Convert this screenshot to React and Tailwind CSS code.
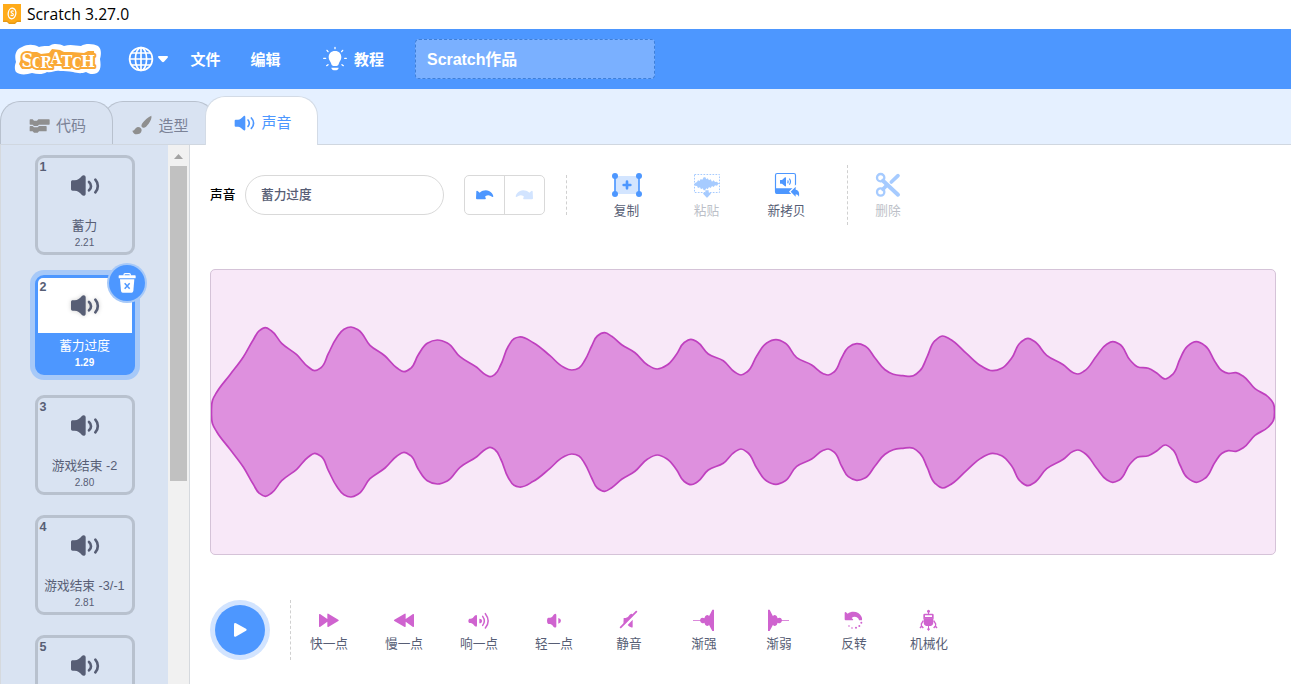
import React from "react";

const SOUNDS = [
  { name: "蓄力", size: "2.21" },
  { name: "蓄力过度", size: "1.29", selected: true },
  { name: "游戏结束 -2", size: "2.80" },
  { name: "游戏结束 -3/-1", size: "2.81" },
  { name: "", size: "" },
];

// Envelope of the sound: [x, half amplitude]
const WAVE = [
  [211.5, 0], [212.6, 12], [216.7, 19.7], [230, 37.3], [243.3, 55], [253.3, 72.3], [259.3, 81.3], [265.3, 84.3],
  [271.3, 81.3], [281.7, 68.7], [296.7, 57.3], [308.3, 45], [314.7, 41.3], [321, 44.3], [328.3, 58.3], [336.7, 74.3],
  [344, 82.7], [351, 85], [358.3, 82], [370, 66.7], [385, 56], [396.7, 44.3], [404, 40.3], [410.7, 43.7],
  [418.3, 57.3], [427.3, 68.7], [437.3, 72], [447.3, 69], [460, 55.3], [476.7, 44.7], [486, 37], [490, 35.3],
  [495, 37.7], [500.7, 47], [508.3, 65.7], [514, 73.3], [519.3, 75], [533.3, 69.3], [550, 56.3], [563.3, 45],
  [571.7, 42], [579, 44], [585, 52], [591.7, 66], [597.3, 76], [604.7, 79.3], [611.7, 75.7], [621.7, 67.3],
  [635, 59.3], [647.3, 47.3], [657.3, 43], [666.7, 46.7], [676.7, 58], [684, 69.3], [691, 72.7], [697.3, 70],
  [708.3, 58], [723.3, 51.3], [735, 39.7], [741, 37], [747.3, 40.3], [756.7, 56], [766.7, 69], [776, 72.3],
  [785, 69], [796.7, 54.3], [811.7, 47], [823.3, 38.3], [828.3, 37], [834, 40], [841.7, 54.3], [848.3, 64.7],
  [856.7, 68.3], [865, 66], [875, 54], [885, 42.3], [893.3, 37.7], [903, 36.3], [913.3, 36.2], [920, 41.3],
  [927.3, 55.7], [935, 71.3], [942.7, 76], [949.3, 73.3], [966.7, 58.3], [981.7, 45.7], [992.3, 41.3], [1001.7, 43.7],
  [1011.7, 54], [1020.7, 69.7], [1028, 73.7], [1034.3, 70.7], [1046.7, 56.7], [1063.3, 47.3], [1073.3, 39.3], [1078, 38],
  [1084.3, 41], [1096.7, 56.3], [1106.7, 67.7], [1112.7, 70.3], [1119.3, 68], [1130, 52], [1137.3, 45.3], [1148.3, 43.7],
  [1156.7, 39], [1165.3, 33], [1172.7, 37.7], [1180, 53], [1187.3, 65.7], [1196.3, 70.3], [1205, 66.3], [1215, 50.3],
  [1221.7, 41.5], [1228.3, 38.7], [1236, 39.3], [1243.3, 35.7], [1255, 23.3], [1268.3, 15], [1273.3, 8.7], [1274.5, 0],
];

// Closed smooth curve; tangents are weighted by chord length
function wavePath() {
  const top = WAVE.map(([x, a]) => [x - 211, 142 - a]);
  const bottom = WAVE.slice(1, -1).reverse().map(([x, a]) => [x - 211, 142 + a]);
  const p = [...top, ...bottom];
  const n = p.length;
  const tangent = p.map((b, i) => {
    const a = p[(i + n - 1) % n], c = p[(i + 1) % n];
    const d1 = Math.hypot(b[0] - a[0], b[1] - a[1]);
    const d2 = Math.hypot(c[0] - b[0], c[1] - b[1]);
    return [0, 1].map((j) => (((b[j] - a[j]) / d1) * d2 + ((c[j] - b[j]) / d2) * d1) / (d1 + d2));
  });
  let d = `M${p[0][0]} ${p[0][1]}`;
  for (let i = 0; i < n; i++) {
    const b = p[i], c = p[(i + 1) % n], t1 = tangent[i], t2 = tangent[(i + 1) % n];
    const k = Math.hypot(c[0] - b[0], c[1] - b[1]) / 2.7;
    d += "C" + [b[0] + t1[0] * k, b[1] + t1[1] * k, c[0] - t2[0] * k, c[1] - t2[1] * k, c[0], c[1]].map((v) => v.toFixed(2)).join(" ");
  }
  return d + "Z";
}

function Speaker({ className }) {
  return (
    <svg className={className} viewBox="210 87 90 69" fill="currentColor">
      <path d="M218 106h6c9 0 16-6 21-12 4-5 12-4 12 3v49c0 7-8 8-12 3-5-6-12-12-21-12h-6c-3 0-5-2-5-5v-21c0-3 2-5 5-5z" />
      <path d="M267 111c8 7 8 18 0 25M286 104c10 11 10 27 0 38" fill="none" stroke="currentColor" strokeWidth="8" strokeLinecap="round" />
    </svg>
  );
}

function Logo() {
  return (
    <svg className="h-[32px] w-[87px]" viewBox="0 0 87 32">
      <path
        d="M8 4C13 1 20 1 25 4C30 2 35 4 37 2C40 0 47 1 50 3C57 1 62 3 67 3C72 0 80 1 84 3C88 6 87 12 86 16C87 22 87 27 83 30C79 32 75 31 72 29C67 31 63 30 59 29C54 28 51 28 46 28C41 27 38 30 33 29C28 32 23 31 18 30C12 32 5 32 2 29C0 25 1 22 2 19C0 12 2 6 8 4Z"
        fill="#fff"
      />
      <path d="M10 9h13l4 2 8-1 3-4 8 1 4 2h8l12 1 4-2h6q1 7 0 15l-8 2-9-1-8 1-8-2-14-1-6 3h-10l-9 1-3-5z" fill="#faa936" />
      <g fontFamily="'DejaVu Serif Condensed', 'DejaVu Serif', serif">
        <text
          x="7.500 18 26.200 36.500 47 58 67"
          y="24 25 24.500 20.500 24 25 24.300"
          fontSize="18"
          fill="#fff"
          stroke="#faa936"
          strokeWidth="4"
          strokeLinejoin="round"
          paintOrder="stroke"
        >
          S<tspan fontSize="14">C</tspan><tspan fontSize="16">R</tspan><tspan fontSize="16">A</tspan><tspan fontSize="17">T</tspan><tspan fontSize="14">C</tspan><tspan fontSize="16.500">H</tspan>
        </text>
      </g>
    </svg>
  );
}

function TitleBar() {
  return (
    <div className="flex h-[29px] shrink-0 items-center bg-white pb-[2px] pl-[3px]">
      <svg className="h-[20px] w-[18px]" viewBox="0 0 18 20">
        <path d="M0 1h18v17h-4l-2 2H6l-2-2H0z" fill="#e69a17" />
        <path d="M0 0h18v16.500h-4l-2 2H6l-2-2H0z" fill="#ffab19" />
        <ellipse cx="9" cy="9.500" rx="3.800" ry="5.300" fill="none" stroke="#fff" strokeWidth="1.300" transform="rotate(8 9 9.500)" />
        <path d="M10.500 7.500c-1-1-2.600-.6-2.500.6.2 1.200 2.400 1 2.400 2.400 0 1.300-2 1.500-2.700.4" fill="none" stroke="#fff" strokeWidth="1.100" />
      </svg>
      <span className="ml-[6px] text-[15.700px] leading-[20px] text-black [font-family:'Open_Sans','Noto_Sans',sans-serif]">Scratch 3.27.0</span>
    </div>
  );
}

function MenuBar() {
  return (
    <div className="flex h-[60px] shrink-0 items-center bg-[#4d97ff] pl-[14px] text-[15px] font-bold text-white">
      <Logo />
      <svg className="ml-[27px] h-[26px] w-[26px]" viewBox="0 0 26 26" fill="none" stroke="#fff" strokeWidth="1.700">
        <circle cx="13" cy="13" r="11.400" />
        <ellipse cx="13" cy="13" rx="5.600" ry="11.400" />
        <path d="M13 1.600v22.800M1.600 13h22.800M3.500 7h19M3.500 19h19" />
      </svg>
      <svg className="ml-[4px] h-[7px] w-[10px]" viewBox="0 0 10 7">
        <path d="M1 0h8c1 0 1.300 1 .6 1.700L6 5.700c-.6.6-1.400.6-2 0L.4 1.700C-.3 1 0 0 1 0z" fill="#fff" />
      </svg>
      <span className="ml-[22.500px] w-[60px] pt-[2px]">文件</span>
      <span className="w-[72px] pt-[2px]">编辑</span>
      <svg className="h-[26px] w-[24px]" viewBox="968 140 72 78" fill="#fff">
        <path d="M1004 155c12 0 19 8 19 19 0 9-6 13-8 20-1 5-3 6-11 6s-10-1-11-6c-2-7-8-11-8-20 0-11 7-19 19-19z" />
        <path d="M993 205h22c0 5-5 8-11 8s-11-3-11-8z" />
        <path d="M1004 144v4M980 153l3 4M1027 153l-3 4M970 177h6M1033 177h5M979 199l4-3M1029 199l-4-3" stroke="#fff" strokeWidth="4" strokeLinecap="round" />
      </svg>
      <span className="ml-[7.500px] pt-[2px]">教程</span>
      <div className="ml-[31px] flex h-[40px] w-[240px] items-center rounded-[4px] border border-dashed border-[#3f7fd8] bg-[#7ab0ff] pt-[2px] pl-[11px] text-[16px]">
        <span className="tracking-[-0.050px]">Scratch作品</span>
      </div>
    </div>
  );
}

function Tabs() {
  return (
    <div className="flex h-[56px] shrink-0 items-end border-b border-[#d0d7e0] bg-[#e5f0ff] text-[15px] text-[#7b8296]">
      <div className="relative z-10 flex h-[43px] w-[113px] items-center rounded-t-[20px] border border-b-0 border-[#b8c1ce] bg-[#d9e3f2] pt-[5px] pl-[28px]">
        <svg className="h-[16px] w-[21px]" viewBox="88 353 63 48" fill="#8f8f8f">
          <path d="M92 357h7l4 4h9l4-4h32q2 0 2 2v12q0 2-2 2h-30l-4 4h-11l-4-4h-7q-2 0-2-2v-12q0-2 2-2z" />
          <path d="M92 377h7l4 4h11l4-4h21q2 0 2 2v12q0 2-2 2h-21l-4 4h-11l-4-4h-7q-2 0-2-2v-12q0-2 2-2z" />
        </svg>
        <span className="ml-[6px] pt-px">代码</span>
      </div>
      <div className="-ml-[10px] flex h-[43px] w-[112px] items-center rounded-t-[20px] border border-b-0 border-[#b8c1ce] bg-[#d9e3f2] pt-[4px] pl-[28px]">
        <svg className="h-[20px] w-[20px]" viewBox="398 344 60 60" fill="#8f8f8f">
          <path d="M456 346c2 6-2 15-8 24-6 8-12 14-17 12-6-2-6-7-2-13 7-10 18-20 27-23z" />
          <path d="M399 391c8 1 8-10 17-11 7 0 11 5 11 10-1 9-8 12-15 12-6 0-11-4-13-11z" />
        </svg>
        <span className="ml-[6.500px] pt-[2px]">造型</span>
      </div>
      <div className="relative z-10 -mb-px -ml-[10px] flex h-[49px] w-[113px] items-center rounded-t-[20px] border border-b-0 border-[#d3dbe6] bg-white pt-[4px] pl-[28px] text-[#4d97ff]">
        <svg className="h-[18px] w-[22px]" viewBox="703 343 66 54" fill="currentColor">
          <path d="M708 360h7c6 0 11-5 15-9 4-4 7-3 7 2v35c0 5-3 6-7 2-4-4-9-9-15-9h-7c-2 0-3-1-3-3v-15c0-2 1-3 3-3z" />
          <path d="M745 361c5 5 5 14 0 19M755 355c9 9 9 22 0 31" fill="none" stroke="currentColor" strokeWidth="5" strokeLinecap="round" />
        </svg>
        <span className="ml-[5.500px] pt-px">声音</span>
      </div>
    </div>
  );
}

function SoundTile({ index, name, size, selected }) {
  return (
    <div
      className={
        "relative flex h-[100px] w-[100px] shrink-0 flex-col items-center rounded-[9px] border-[3px] " +
        (selected
          ? "border-[#4d97ff] bg-[#4d97ff] text-white shadow-[0_0_0_5px_#a7c9f8]"
          : "border-[#b8c1ce] text-[#575e75]")
      }
    >
      <div className={"flex h-[55px] w-full items-center justify-center pb-px text-[#575e75] " + (selected ? "rounded-t-[5px] bg-white" : "")}>
        <Speaker className={"h-[23px] w-[30px] " + (selected ? "drop-shadow-[0_0_2px_rgba(0,0,0,0.2)]" : "")} />
      </div>
      {name && <span className="mt-[6px] text-[12.700px] leading-[15px] whitespace-nowrap">{name}</span>}
      {size && <span className={"mt-[2px] text-[10px] leading-[13px] " + (selected ? "font-bold" : "")}>{size}</span>}
      <span className="absolute top-[2px] left-[2px] text-[12.500px] leading-[15px] font-bold text-[#575e75]">{index}</span>
      {selected && (
        <span className="absolute top-[-13px] right-[-13px] flex h-[36px] w-[36px] items-center justify-center rounded-full bg-[#4d97ff] shadow-[0_0_0_2px_#a7c9f8]">
          <svg className="h-[20px] w-[18px]" viewBox="355 382 54 60">
            <path d="M373 390v-3q0-3 3-3h13q3 0 3 3v3" fill="none" stroke="#fff" strokeWidth="3.500" />
            <rect x="357" y="389" width="51" height="9" rx="2" fill="#fff" />
            <path d="M361 401h43l-3 35q-1 5-5 5h-27q-4 0-5-5z" fill="#fff" />
            <path d="M375 413l15 16M390 413l-15 16" stroke="#4d97ff" strokeWidth="4.500" />
          </svg>
        </span>
      )}
    </div>
  );
}

function Sidebar() {
  return (
    <div className="flex w-[190px] shrink-0 overflow-hidden border-x border-[#d5d9de] bg-[#d9e3f2]">
      <div className="flex w-[167px] shrink-0 flex-col items-center gap-[20px] pt-[10px]">
        {SOUNDS.map((s, i) => (
          <SoundTile key={i} index={i + 1} {...s} />
        ))}
      </div>
      <div className="flex grow flex-col items-center bg-[#f1f1f1]">
        <div className="flex h-[21px] items-center">
          <svg className="mt-[2px] h-[5px] w-[9px]" viewBox="0 0 9 5"><path d="M0 5L4.500 0L9 5z" fill="#a3a3a3" /></svg>
        </div>
        <div className="h-[315px] w-[17px] bg-[#c1c1c1]" />
      </div>
    </div>
  );
}

function ToolButton({ label, children, viewBox, className = "" }) {
  return (
    <div className={"flex w-[80px] flex-col items-center " + className}>
      <svg className="h-[30px] w-[40px] shrink-0" viewBox={viewBox}>{children}</svg>
      <span className="mt-[3px] text-[12.700px] leading-[16px]">{label}</span>
    </div>
  );
}

function Toolbar() {
  return (
    <div className="flex h-[60px] items-center text-[12.700px] text-[#575e75]">
      <span className="w-[35px] pt-px font-medium text-black">声音</span>
      <div className="flex h-[40px] w-[199px] items-center rounded-full border border-[#d9d9d9] pt-px pl-[15px] font-medium">蓄力过度</div>
      <div className="ml-[20px] flex h-[40px] w-[81px] rounded-[5px] border border-[#d9d9d9]">
        <div className="flex w-[40px] items-center justify-center border-r border-[#d9d9d9]">
          <svg className="h-[12px] w-[20px]" viewBox="825 101 60 36" fill="#4d97ff">
            <path d="M829 108q1-3 4-1l6 5c9-7 19-9 28-5 7 3 12 9 13 16 0 2-2 3-4 1-6-5-13-6-19-2-2 2-2 3 0 5q2 5-2 5h-24q-3 0-3-3z" />
          </svg>
        </div>
        <div className="flex w-[38px] items-center justify-center">
          <svg className="h-[12px] w-[20px] -scale-x-100" viewBox="825 101 60 36" fill="#d2e4ff">
            <path d="M829 108q1-3 4-1l6 5c9-7 19-9 28-5 7 3 12 9 13 16 0 2-2 3-4 1-6-5-13-6-19-2-2 2-2 3 0 5q2 5-2 5h-24q-3 0-3-3z" />
          </svg>
        </div>
      </div>
      <div className="ml-[21px] h-[40px] border-l border-dashed border-[#d0d0d0]" />
      <div className="ml-[19.500px] flex h-[50px]">
        <ToolButton label="复制" viewBox="141 45 120 90">
          <rect x="165" y="63" width="72" height="54" fill="#d3e5ff" />
          <path d="M165 63v54M237 63v54" stroke="#4d97ff" strokeWidth="5" />
          <g fill="#4d97ff">
            <circle cx="165" cy="63" r="9" /><circle cx="237" cy="63" r="9" />
            <circle cx="165" cy="117" r="9" /><circle cx="237" cy="117" r="9" />
          </g>
          <path d="M201 80v20M191 90h20" stroke="#4d97ff" strokeWidth="8" strokeLinecap="round" />
        </ToolButton>
        <ToolButton label="粘贴" viewBox="381 45 120 90" className="text-[#bcbfc8]">
          <rect x="403.500" y="58.500" width="75" height="54" fill="none" stroke="#a6cbff" strokeWidth="3" strokeDasharray="5 4" />
          <path d="M404 85l7-4 3-5 5 2 3-6 5 2 4-7h5l3 6 4-3 4 6 5-3 4 7 5-4 4 5 6-1 3 4 5 1-5 3-3 4-6-1-4 5-5-3-4 6-5-3-4 7-4-3-4 6h-4l-3-6-5 3-3-6-6 2-3-6-6-1z" fill="#a6cbff" />
          <path d="M436 106h10v7h5q3 1 1 4l-9 10q-2 2-4 0l-9-10q-2-3 1-4h5z" fill="#a6cbff" />
        </ToolButton>
        <ToolButton label="新拷贝" viewBox="621 45 120 90">
          <rect x="646.500" y="55.500" width="60" height="60" rx="5" fill="#fff" stroke="#4d97ff" strokeWidth="3.500" />
          <path d="M646 100h61v11q0 6-6 6h-49q-6 0-6-6z" fill="#4d97ff" />
          <path d="M661 75h5l9-8q3-1 3 2v23q0 3-3 2l-9-8h-5q-1 0-1-1v-9q0-1 1-1z" fill="#4d97ff" />
          <path d="M683 76q3 4 0 9M688 71q7 9 0 18" fill="none" stroke="#4d97ff" strokeWidth="3.500" />
          <path d="M692 110l15-15v9c9 1 12 9 10 21-3-5-6-7-10-7v7z" fill="#4d97ff" stroke="#fff" strokeWidth="7" paintOrder="stroke" />
        </ToolButton>
      </div>
      <div className="ml-[20.500px] h-[60px] border-l border-dashed border-[#d0d0d0]" />
      <ToolButton label="删除" viewBox="924 45 120 90" className="h-[50px] text-[#bcbfc8]">
        <g fill="none" stroke="#a6cbff">
          <circle cx="962" cy="68" r="11" strokeWidth="7" />
          <circle cx="962" cy="111" r="11" strokeWidth="7" />
          <path d="M969 77l45 42" strokeWidth="12" strokeLinecap="round" />
          <path d="M969 103l12-13M994 81l20-19" strokeWidth="11" strokeLinecap="round" />
        </g>
      </ToolButton>
    </div>
  );
}

const EFFECTS = [
  {
    label: "快一点", viewBox: "341 57 90 72",
    icon: <path d="M359 72q-3-1-3 2v35q0 3 3 2l22-16v14q0 3 3 2l30-18q3-2 0-4l-30-18q-3-1-3 2v14z" />,
  },
  {
    label: "慢一点", viewBox: "567 57 90 72",
    icon: <path d="M639 72q3-1 3 2v35q0 3-3 2l-22-16v14q0 3-3 2l-31-18q-3-2 0-4l31-18q3-1 3 2v14z" />,
  },
  {
    label: "响一点", viewBox: "792 57 90 72",
    icon: (
      <>
        <path d="M808 86h5q6-1 11-9 7-5 7 2v27q0 7-7 2-5-8-11-9h-5q-3-1-3-6t3-7z" />
        <path d="M838 86q8 0 8 7t-8 7z" />
        <path d="M848 79q10 14 0 27M856 71q17 22 0 43" fill="none" stroke="currentColor" strokeWidth="4.500" strokeLinecap="round" />
      </>
    ),
  },
  {
    label: "轻一点", viewBox: "1017 57 90 72",
    icon: (
      <>
        <path d="M1045 83h6q6-1 10-9 8-6 8 2v33q0 6-8 2-4-8-10-9h-6q-4-1-4-10t4-9z" />
        <path d="M1075 84q8 2 8 8.500t-8 8.500z" />
      </>
    ),
  },
  {
    label: "静音", viewBox: "102 57 90 72",
    icon: (
      <>
        <path d="M131 84h6q8-2 12-10 9-6 9 2v2l-27 27q-1-8 0-21zM143 105l15-16v21q0 4-5 2-5-2-10-7z" />
        <path d="M122 112l47-47" stroke="currentColor" strokeWidth="5.500" strokeLinecap="round" />
      </>
    ),
  },
  {
    label: "渐强", viewBox: "327 57 90 72",
    icon: (
      <path d="M339 90h21q2-7 7-7 4 0 6 2 2-9 8-10 5 0 6 4 4-8 10-20h5v64h-5q-6-11-10-19-1 4-6 4-6-1-8-10-2 2-6 2-5-1-7-8h-21z" />
    ),
  },
  {
    label: "渐弱", viewBox: "552 57 90 72",
    icon: (
      <path d="M627 90h-21q-2-7-7-7-4 0-6 2-2-9-8-10-5 0-6 4-4-8-10-20h-5v64h5q6-11 10-19 1 4 6 4 6-1 8-10 2 2 6 2 5-1 7-8h21z" />
    ),
  },
  {
    label: "反转", viewBox: "777 57 90 72",
    icon: (
      <>
        <path d="M794 68q1-3 4-1l5 4c14-10 35-6 42 10q2 6 1 10h-9c-1-10-15-14-22-7l4 4q2 3-1 3h-21q-3 0-3-3z" />
        <circle cx="844" cy="98" r="3" /><circle cx="838" cy="108" r="3" /><circle cx="828" cy="113" r="3" />
        <circle cx="816" cy="114" r="2.500" /><circle cx="807" cy="108" r="2.500" />
      </>
    ),
  },
  {
    label: "机械化", viewBox: "1002 57 90 72",
    icon: (
      <>
        <circle cx="1045.500" cy="64" r="4.500" />
        <path d="M1044 64h3v10h-3z" />
        <path fillRule="evenodd" d="M1034 71h23q4 0 4 4v11h-31v-11q0-4 4-4zM1035 76v5h21v-5z" />
        <path d="M1031 85h29v11q0 10-8 12h-13q-8-2-8-12z" />
        <path d="M1030 92l-6 10 1 10M1061 92l6 10-1 10M1020 114l5-6 5 6M1061 114l5-6 5 6" fill="none" stroke="currentColor" strokeWidth="4" />
        <path d="M1044 106h3v8l3 4-4.500 5-4.500-5 3-4z" />
      </>
    ),
  },
];

function Effects() {
  return (
    <div className="flex h-[60px] items-center text-[12.700px] text-[#575e75]">
      <div className="flex h-[60px] w-[60px] items-center justify-center rounded-full bg-[#d2e4ff]">
        <div className="flex h-[50px] w-[50px] items-center justify-center rounded-full bg-[#4d97ff]">
          <svg className="h-[16px] w-[14px]" viewBox="0 0 14 16"><path d="M1 2.500q0-2 2-1.300l10 5.600q1.300 1 0 2l-10 5.800q-2 .8-2-1.300z" fill="#fff" /></svg>
        </div>
      </div>
      <div className="ml-[20px] h-[60px] border-l border-dashed border-[#d0d0d0]" />
      <div className="flex h-[42px]">
        {EFFECTS.map((e) => (
          <div key={e.label} className="flex w-[75px] flex-col items-center">
            <svg className="h-[24px] w-[30px] shrink-0 text-[#cf63cf]" viewBox={e.viewBox} fill="currentColor">{e.icon}</svg>
            <span className="mt-[3px] shrink-0 pl-px leading-[16px]">{e.label}</span>
          </div>
        ))}
      </div>
    </div>
  );
}

export default function App() {
  return (
    <div className="flex h-[684px] w-[1291px] flex-col overflow-hidden bg-white [font-family:'Liberation_Sans','Noto_Sans_CJK_SC',sans-serif]">
      <TitleBar />
      <MenuBar />
      <Tabs />
      <div className="flex min-h-0 grow">
        <Sidebar />
        <div className="flex grow flex-col bg-white pt-[20px] pl-[20px]">
          <Toolbar />
          <div className="mt-[44px] h-[286px] w-[1066px] shrink-0 overflow-hidden rounded-[5px] border border-[#d5c3d8] bg-[#f8e8f8]">
            <svg className="h-[284px] w-[1064px]" viewBox="0 0 1064 284">
              <path d={wavePath()} fill="#de90de" stroke="#bf40bf" strokeWidth="1.700" strokeLinejoin="round" />
            </svg>
          </div>
          <div className="mt-[45px]">
            <Effects />
          </div>
        </div>
      </div>
    </div>
  );
}
